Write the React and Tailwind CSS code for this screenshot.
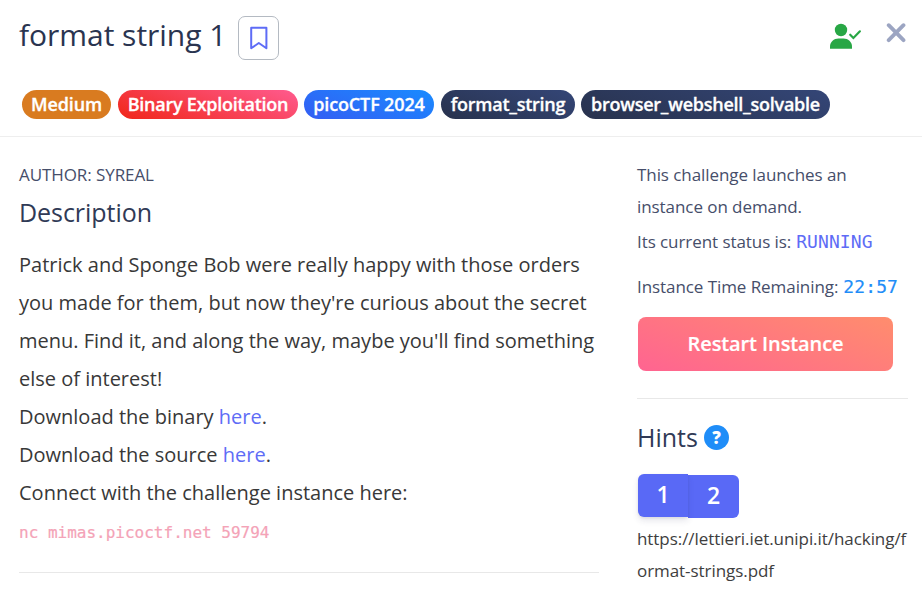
function Tag({ className, children }) {
  return (
    <span className={`flex h-[29px] items-center justify-center whitespace-nowrap rounded-full pb-[2px] text-[18px] font-semibold leading-none text-white [-webkit-text-stroke:0.3px_white] ${className}`}>
      {children}
    </span>
  );
}

function Header() {
  return (
    <header className="h-[137px] border-b border-[#eeeeee]">
      <div className="flex h-[90px] items-start pl-[19px] pr-[16px]">
        <h1 className="mt-[14px] w-[219px] whitespace-nowrap text-[30px] leading-[41px] tracking-[-0.03px] text-[#2a3450]">format string 1</h1>
        <button aria-label="Bookmark" className="mt-[16px] flex h-[44px] w-[41px] items-center justify-center rounded-[7px] border border-[#b4bac2]">
          <svg width="18" height="24" viewBox="0 0 18 24" fill="none" stroke="#5e6cf6" strokeWidth="2">
            <path d="M1.2 1.7h15.2v20.6L8.8 17l-7.6 5.3z" strokeLinejoin="round" />
          </svg>
        </button>
        <svg className="ml-auto mt-[23px]" width="32" height="27" viewBox="0 0 32 27">
          <circle cx="11" cy="7" r="6.2" fill="#28a745" />
          <path d="M0 25.7v-2.2C0 18.8 4 15.5 8.500 15.500h5c4.600 0 8.500 3.300 8.500 8v2.200z" fill="#28a745" />
          <path d="m20.200 11.700 3.200 3.300 6.500-6.700" fill="none" stroke="#28a745" strokeWidth="2.200" strokeLinecap="round" />
        </svg>
        <svg className="ml-[24px] mt-[23px]" width="20" height="20" viewBox="0 0 20 20" fill="none" stroke="#9ca5c2" strokeWidth="3.800" strokeLinecap="round">
          <path d="m2.700 2.200 14.800 15M17.500 2.200l-14.800 15" />
        </svg>
      </div>
      <div className="flex pl-[22px]">
        <Tag className="w-[89px] bg-[#d97b20] tracking-[-0.1px]">Medium</Tag>
        <Tag className="ml-[7px] w-[180px] bg-[linear-gradient(20deg,#f02618,#ff5b8f)] tracking-[-0.24px]">Binary Exploitation</Tag>
        <Tag className="ml-[6px] w-[130px] bg-[linear-gradient(20deg,#345df3,#198bff)] tracking-[-0.15px]">picoCTF 2024</Tag>
        <Tag className="ml-[7px] w-[134px] bg-[linear-gradient(20deg,#28324d,#344677)] tracking-[-0.25px]">format_string</Tag>
        <Tag className="ml-[6px] w-[249px] bg-[linear-gradient(20deg,#28324d,#344677)] tracking-[-0.25px]">browser_webshell_solvable</Tag>
      </div>
    </header>
  );
}

function Description() {
  return (
    <section className="w-[580px] shrink-0 whitespace-nowrap">
      <p className="mt-[22px] text-[17px] leading-[32px] tracking-[-0.08px] text-[#464e6a]">AUTHOR: SYREAL</p>
      <h2 className="mt-[3px] text-[25px] leading-[36px] tracking-[-0.05px] text-[#303a56]">Description</h2>
      <p className="mt-[16px] text-[20px] leading-[38px] text-[#383838]">
        Patrick and Sponge Bob were really happy with those orders<br />
        you made for them, but now they're curious about the secret<br />
        menu. Find it, and along the way, maybe you'll find something<br />
        else of interest!<br />
        Download the binary <a className="text-[#5e6cf6]">here</a>.<br />
        Download the source <a className="text-[#5e6cf6]">here</a>.<br />
        Connect with the challenge instance here:
      </p>
      <code className="block pt-px font-['DejaVu_Sans_Mono',monospace] text-[16px] leading-[40px] text-[#f4a3b7] [-webkit-text-stroke:0.2px_#f4a3b7]">nc mimas.picoctf.net 59794</code>
      <hr className="mt-[19px] border-[#e8e8e8]" />
    </section>
  );
}

function Instance() {
  return (
    <aside className="ml-[38px] w-[271px] whitespace-nowrap">
      <div className="mt-[22px] text-[17px] leading-[32px] tracking-[-0.07px] text-[#464e6a]">
        <p>This challenge launches an<br />instance on demand.</p>
        <p className="mt-[3px] flex h-[32px]">Its current status is:<code className="ml-[5px] font-['DejaVu_Sans_Mono',monospace] text-[18px] tracking-[0.08px] text-[#5e6cf6]">RUNNING</code></p>
        <p className="mt-[13px] flex h-[32px]">Instance Time Remaining:<code className="ml-[5px] font-['DejaVu_Sans_Mono',monospace] text-[18px] tracking-[0.1px] text-[#1f8df8] [-webkit-text-stroke:0.2px_#1f8df8]">22:57</code></p>
      </div>
      <button className="ml-px mt-[14px] flex h-[54px] w-[255px] items-center justify-center rounded-[8px] bg-[linear-gradient(20deg,#ff6491,#ff8d6d)] text-[20px] font-semibold tracking-[-0.1px] text-white [-webkit-text-stroke:0.2px_white]">Restart Instance</button>
      <hr className="mt-[27px] border-[#e8e8e8]" />
      <div className="mt-[19px] flex h-[38px] items-center">
        <h2 className="w-[67px] text-[25px] leading-[36px] text-[#303a56]">Hints</h2>
        <span className="flex h-[25px] w-[25px] items-center justify-center rounded-full bg-[#1f8df8] text-[17px] font-extrabold leading-none text-white">?</span>
      </div>
      <div className="ml-px mt-[19px] flex text-[23px] font-semibold text-white">
        <button className="z-10 -mt-px mb-px flex h-[43px] w-[50px] items-center justify-center rounded-l-[6px] bg-[#5969f6] pb-[3px] shadow-[0_4px_6px_rgba(50,50,93,.11),0_1px_3px_rgba(0,0,0,.08)]">1</button>
        <button className="flex h-[43px] w-[51px] items-center justify-center rounded-r-[6px] bg-[#5969f6] pb-[3px]">2</button>
      </div>
      <p className="mt-[5px] text-[17px] leading-[32px] tracking-[-0.06px] text-[#3e3e3e]">https://lettieri.iet.unipi.it/hacking/f<br />ormat-strings.pdf</p>
    </aside>
  );
}

export default function App() {
  return (
    <main className="h-[595px] w-[922px] overflow-hidden bg-white font-['Open_Sans',sans-serif]">
      <Header />
      <div className="flex pl-[19px]">
        <Description />
        <Instance />
      </div>
    </main>
  );
}
